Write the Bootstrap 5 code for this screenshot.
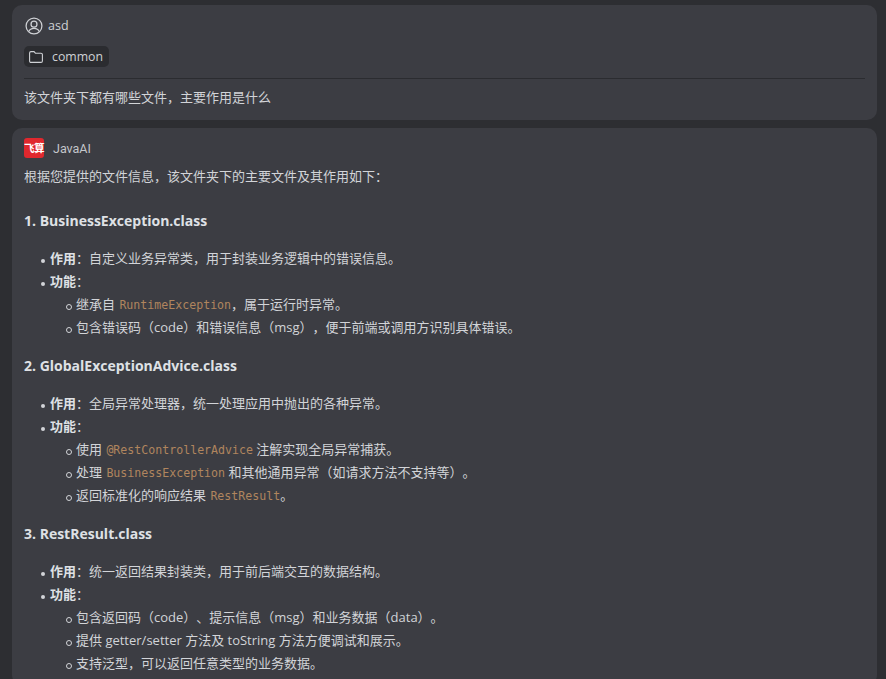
<!DOCTYPE html>
<html lang="zh">
<head>
<meta charset="utf-8">
<title>JavaAI</title>
<link href="https://cdn.jsdelivr.net/npm/bootstrap@5.3.0/dist/css/bootstrap.min.css" rel="stylesheet">
<style>
html,body{height:100%;overflow:hidden}
body{background:#2d2e32;color:#d2d4d8;font-family:"Open Sans","Noto Sans CJK SC",sans-serif;font-size:13px;line-height:23px;text-spacing-trim:space-all}
.chat-wrap{padding:5px 9px 0 12px;display:flex;flex-direction:column;gap:8px}
.msg-box{background:#3c3d43;border-radius:10px;padding:10px 12px}
.user-box{height:115px}
.user-row{height:21px;gap:5px;color:#cfd1d5;font-size:12.5px}
.user-ico{width:18px;height:18px;margin-left:1px;flex:none}
.file-tag{background:#2b2c30;border-radius:5px;height:21px;padding:0 6px 0 5px;gap:9px;margin-top:10px;font-size:12.3px;color:#cfd1d5;width:fit-content}
.sep{border-top:1px solid #2b2c30;margin:11px 0 0;height:0;opacity:1}
.ask-text{margin-top:7px}
.ai-head{height:20px;gap:9px;font-size:12.5px;font-family:Roboto,sans-serif;color:#c4c6ca}
.ai-logo{width:20px;height:20px;background:#e0282e;border-radius:3px;color:#fff;font-family:"Noto Sans CJK SC",sans-serif;font-size:10.5px;font-weight:700;letter-spacing:-.5px;line-height:20px;white-space:nowrap;text-align:center;flex:none}
.ai-text{margin:7px 0 21px}
.sec-title{font-size:14px;font-weight:700;line-height:23px;color:#dfe1e5;margin:15px 0 15px}
.sec-list,.sub-list{margin:0;padding:0;list-style:none}
.sec-list>li{padding-left:26px;position:relative}
.sec-list>li::before{content:"";position:absolute;left:17px;top:12px;width:4px;height:4px;background:#d2d4d8;border-radius:50%}
.sub-list>li{padding-left:26px;position:relative}
.sub-list>li::before{content:"";position:absolute;left:16px;top:11px;width:6px;height:6px;border:1px solid #d2d4d8;border-radius:50%}
.sec-list b{font-weight:700;color:#dfe1e5}
.code-txt{font-family:"DejaVu Sans Mono",monospace;font-size:11.6px;line-height:1;margin-left:1px;color:#b0855e}
</style>
</head>
<body>
<div class="chat-wrap">
  <section class="msg-box user-box">
    <div class="user-row d-flex align-items-center">
      <svg class="user-ico" viewBox="0 0 20 20" fill="none" stroke="#cfd1d5" stroke-width="1.4"><circle cx="10" cy="10" r="8.8"/><circle cx="10" cy="8" r="3.300"/><path d="M4.200 16.200c1-2.600 3-3.600 5.800-3.600s4.800 1 5.800 3.600"/></svg>
      <span>asd</span>
    </div>
    <div class="file-tag d-flex align-items-center">
      <svg width="14" height="12" viewBox="0 0 14 12" fill="none" stroke="#cfd1d5" stroke-width="1.100"><path d="M.6 2C.6 1.100 1.200.6 2 .6h3l1.400 1.600H12c.8 0 1.400.6 1.400 1.400V10c0 .8-.6 1.400-1.400 1.400H2C1.200 11.400.6 10.800.6 10z"/></svg>
      <span>common</span>
    </div>
    <hr class="sep">
    <div class="ask-text">该文件夹下都有哪些文件，主要作用是什么</div>
  </section>
  <section class="msg-box">
    <div class="ai-head d-flex align-items-center">
      <div class="ai-logo">飞算</div>
      <span>JavaAI</span>
    </div>
    <p class="ai-text">根据您提供的文件信息，该文件夹下的主要文件及其作用如下：</p>
    <h3 class="sec-title">1. BusinessException.class</h3>
    <ul class="sec-list">
      <li><b>作用</b>：自定义业务异常类，用于封装业务逻辑中的错误信息。</li>
      <li><b>功能</b>：
        <ul class="sub-list">
          <li>继承自 <code class="code-txt">RuntimeException</code>，属于运行时异常。</li>
          <li>包含错误码（code）和错误信息（msg），便于前端或调用方识别具体错误。</li>
        </ul>
      </li>
    </ul>
    <h3 class="sec-title">2. GlobalExceptionAdvice.class</h3>
    <ul class="sec-list">
      <li><b>作用</b>：全局异常处理器，统一处理应用中抛出的各种异常。</li>
      <li><b>功能</b>：
        <ul class="sub-list">
          <li>使用 <code class="code-txt">@RestControllerAdvice</code> 注解实现全局异常捕获。</li>
          <li>处理 <code class="code-txt">BusinessException</code> 和其他通用异常（如请求方法不支持等）。</li>
          <li>返回标准化的响应结果 <code class="code-txt">RestResult</code>。</li>
        </ul>
      </li>
    </ul>
    <h3 class="sec-title">3. RestResult.class</h3>
    <ul class="sec-list">
      <li><b>作用</b>：统一返回结果封装类，用于前后端交互的数据结构。</li>
      <li><b>功能</b>：
        <ul class="sub-list">
          <li>包含返回码（code）、提示信息（msg）和业务数据（data）。</li>
          <li>提供 getter/setter 方法及 toString 方法方便调试和展示。</li>
          <li>支持泛型，可以返回任意类型的业务数据。</li>
        </ul>
      </li>
    </ul>
  </section>
</div>
</body>
</html>
